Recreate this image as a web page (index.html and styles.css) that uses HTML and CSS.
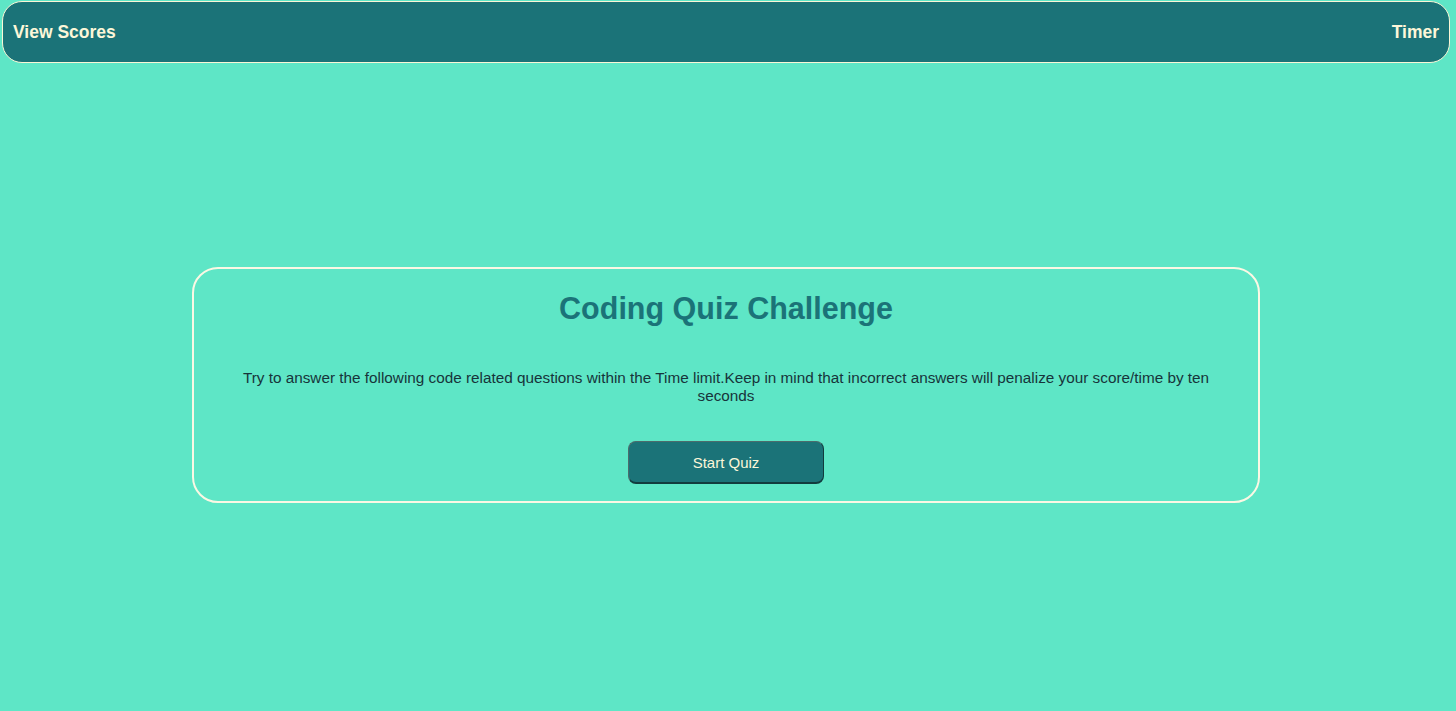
FILE: index.html
```html
<!DOCTYPE html>
<html lang="en">
<head>
<meta charset="utf-8">
<title>Coding Quiz Challenge</title>
<link rel="stylesheet" href="styles.css">
</head>
<body>
  <header class="topbar">
    <a class="topbar-link">View Scores</a>
    <span class="topbar-timer">Timer</span>
  </header>
  <main class="stage">
    <section class="card">
      <h1 class="card-title">Coding Quiz Challenge</h1>
      <p class="card-text">Try to answer the following code related questions within the Time limit.Keep in mind that incorrect answers will penalize your score/time by ten seconds</p>
      <button class="start-btn" type="button">Start Quiz</button>
    </section>
  </main>
</body>
</html>
```

FILE: styles.css
```css
html {
  background: #5ee6c6;
}
body {
  margin: 0 4px 0 0;
  font-family: "Liberation Sans", Arial, sans-serif;
  background: #5ee6c6;
}
.topbar {
  margin: 1px 2px 0 2px;
  height: 60px;
  border: 1px solid #fbf6d6;
  border-radius: 20px;
  background: #1b7378;
  display: flex;
  align-items: center;
  justify-content: space-between;
  padding: 0 10px;
  color: #fcf7d9;
  font-weight: bold;
  font-size: 17.5px;
}
.topbar-link {
  cursor: pointer;
}
.stage {
  display: flex;
  justify-content: center;
  padding-top: 204px;
}
.card {
  width: 1068px;
  border: 2px solid #fbf8e4;
  border-radius: 26px;
  display: flex;
  flex-direction: column;
  align-items: center;
  padding: 0 40px 17px;
  box-sizing: border-box;
}
.card-title {
  margin: 20px 0 0;
  font-size: 30.5px;
  line-height: 38px;
  color: #1b7378;
  font-weight: bold;
}
.card-text {
  margin: 42px 0 0;
  font-size: 15.3px;
  line-height: 18px;
  text-align: center;
  color: #17343a;
  max-width: 990px;
}
.start-btn {
  margin-top: 36px;
  width: 196px;
  height: 43px;
  background: #1b7378;
  color: #fcf7d9;
  font-family: "Liberation Sans", Arial, sans-serif;
  font-size: 15px;
  border-radius: 8px;
  border: 1px solid #4c6c6c;
  border-right-color: #123c3e;
  border-bottom: 2px solid #123c3e;
  cursor: pointer;
}
```
